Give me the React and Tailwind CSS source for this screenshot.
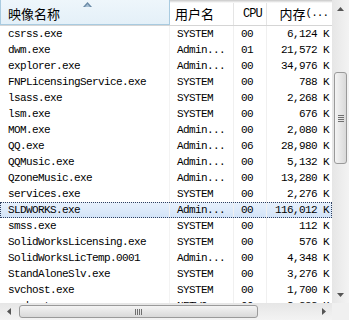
import React from "react";

const rows = [
  ["csrss.exe", "SYSTEM", "00", "6,124 K"],
  ["dwm.exe", "Admin...", "01", "21,572 K"],
  ["explorer.exe", "Admin...", "00", "34,976 K"],
  ["FNPLicensingService.exe", "SYSTEM", "00", "788 K"],
  ["lsass.exe", "SYSTEM", "00", "2,268 K"],
  ["lsm.exe", "SYSTEM", "00", "676 K"],
  ["MOM.exe", "Admin...", "00", "2,080 K"],
  ["QQ.exe", "Admin...", "06", "28,980 K"],
  ["QQMusic.exe", "Admin...", "00", "5,132 K"],
  ["QzoneMusic.exe", "Admin...", "00", "13,280 K"],
  ["services.exe", "SYSTEM", "00", "2,276 K"],
  ["SLDWORKS.exe", "Admin...", "00", "116,012 K"],
  ["smss.exe", "SYSTEM", "00", "112 K"],
  ["SolidWorksLicensing.exe", "SYSTEM", "00", "576 K"],
  ["SolidWorksLicTemp.0001", "Admin...", "00", "4,348 K"],
  ["StandAloneSlv.exe", "SYSTEM", "00", "3,276 K"],
  ["svchost.exe", "SYSTEM", "00", "1,700 K"],
  ["svchost.exe", "NETWO...", "00", "2,232 K"],
];

const mono = { fontFamily: '"Liberation Mono", "Noto Sans CJK SC", monospace' };
const cjk = { fontFamily: '"Noto Sans CJK SC", "Liberation Sans", sans-serif' };

function Tri({ dir }) {
  const pts = {
    up: "0,4 3.5,0 7,4",
    down: "0,0 7,0 3.5,4",
    left: "4,0 4,7 0,3.5",
    right: "0,0 4,3.5 0,7",
  }[dir];
  const w = dir === "up" || dir === "down" ? 7 : 4;
  const h = dir === "up" || dir === "down" ? 4 : 7;
  return (
    <svg width={w} height={h} viewBox={`0 0 ${w} ${h}`}>
      <polygon points={pts} fill="#555" />
    </svg>
  );
}

export default function App() {
  return (
    <div className="w-[349px] h-[320px] overflow-hidden bg-white flex flex-col text-black" style={mono}>
      <div className="flex h-[303px]">
        <div className="w-[332px] flex flex-col overflow-hidden">
          {/* header */}
          <div className="h-[26px] flex shrink-0 relative bg-white border-b border-[#d5d5d5]">
            <div className="absolute left-0 right-0 top-0 h-[3px] bg-gradient-to-b from-[#c8c8c8] to-white" />
            <div className="relative w-[170px] h-[25px] flex items-center pl-[7px] bg-gradient-to-b from-[#eef6fb] to-[#e4f0f8] border border-[#a9cbe0] border-t-0">
              <div className="absolute left-[82px] top-[2px]">
                <svg width="9" height="5" viewBox="0 0 9 5">
                  <polygon points="0,5 4.5,0 9,5" fill="#6a8aa6" />
                  <polygon points="2,5 4.5,2 7,5" fill="#a8c0d4" />
                </svg>
              </div>
              <span className="text-[13px] leading-none pt-[2px]" style={cjk}>映像名称</span>
            </div>
            <div className="w-[64px] flex items-center pl-[5px] border-r border-[#e5e5e5]">
              <span className="text-[13px] leading-none pt-[2px]" style={cjk}>用户名</span>
            </div>
            <div className="w-[33px] flex items-center pl-[9px] border-r border-[#e5e5e5]">
              <span className="text-[12px] tracking-[-1px] leading-none pt-[2px]">CPU</span>
            </div>
            <div className="w-[65px] flex items-center justify-end pr-[4px]">
              <span className="text-[13px] leading-none pt-[2px]" style={cjk}>内存</span>
              <span className="text-[11px] tracking-[-1px] leading-none pt-[2px]">(...</span>
            </div>
          </div>
          {/* rows */}
          <div className="flex flex-col">
            {rows.map((r, i) => {
              const sel = i === 11;
              return (
                <div
                  key={i}
                  className={
                    "h-[16px] flex shrink-0 text-[11px] tracking-[-0.6px] leading-[16px] " +
                    (sel
                      ? "bg-gradient-to-b from-[#e8f1fc] to-[#d3e4f8] outline-1 outline-dotted outline-[#2f3f5f] -outline-offset-1"
                      : "")
                  }
                >
                  <div className="w-[170px] pl-[8px] whitespace-nowrap overflow-hidden border-r border-[#f3f3f3]">{r[0]}</div>
                  <div className="w-[64px] pl-[7px] whitespace-nowrap border-r border-[#f0f0f0]">{r[1]}</div>
                  <div className="w-[33px] pl-[7px] whitespace-nowrap border-r border-[#f0f0f0]">{r[2]}</div>
                  <div className="w-[65px] pr-[3px] text-right whitespace-nowrap">{r[3]}</div>
                </div>
              );
            })}
          </div>
        </div>
        {/* vertical scrollbar */}
        <div className="w-[17px] flex flex-col bg-gradient-to-r from-[#e6e6e6] to-[#f3f3f3]">
          <div className="h-[17px] flex items-center justify-center"><Tri dir="up" /></div>
          <div className="flex-1 flex flex-col pt-[55px]">
            <div className="h-[92px] mx-[2px] rounded-[3px] border border-[#9a9a9a] bg-gradient-to-r from-[#f4f4f4] to-[#d9d9d9] flex flex-col items-center justify-center gap-[1px]">
              <div className="w-[6px] h-[1px] bg-[#6f6f6f]" />
              <div className="w-[6px] h-[1px] bg-[#6f6f6f]" />
              <div className="w-[6px] h-[1px] bg-[#6f6f6f]" />
              <div className="w-[6px] h-[1px] bg-[#6f6f6f]" />
            </div>
          </div>
          <div className="h-[17px] flex items-center justify-center"><Tri dir="down" /></div>
        </div>
      </div>
      {/* horizontal scrollbar */}
      <div className="h-[17px] flex">
        <div className="w-[332px] flex bg-gradient-to-b from-[#e6e6e6] to-[#f3f3f3]">
          <div className="w-[17px] flex items-center justify-center"><Tri dir="left" /></div>
          <div className="flex-1 flex items-center pl-[2px]">
            <div className="w-[239px] h-[13px] rounded-[3px] border border-[#9a9a9a] bg-gradient-to-b from-[#f4f4f4] to-[#d9d9d9] flex items-center justify-center gap-[1px]">
              <div className="w-[1px] h-[6px] bg-[#6f6f6f]" />
              <div className="w-[1px] h-[6px] bg-[#6f6f6f]" />
              <div className="w-[1px] h-[6px] bg-[#6f6f6f]" />
              <div className="w-[1px] h-[6px] bg-[#6f6f6f]" />
            </div>
          </div>
          <div className="w-[17px] flex items-center justify-center"><Tri dir="right" /></div>
        </div>
        <div className="w-[17px] bg-[#f0f0f0]" />
      </div>
    </div>
  );
}
